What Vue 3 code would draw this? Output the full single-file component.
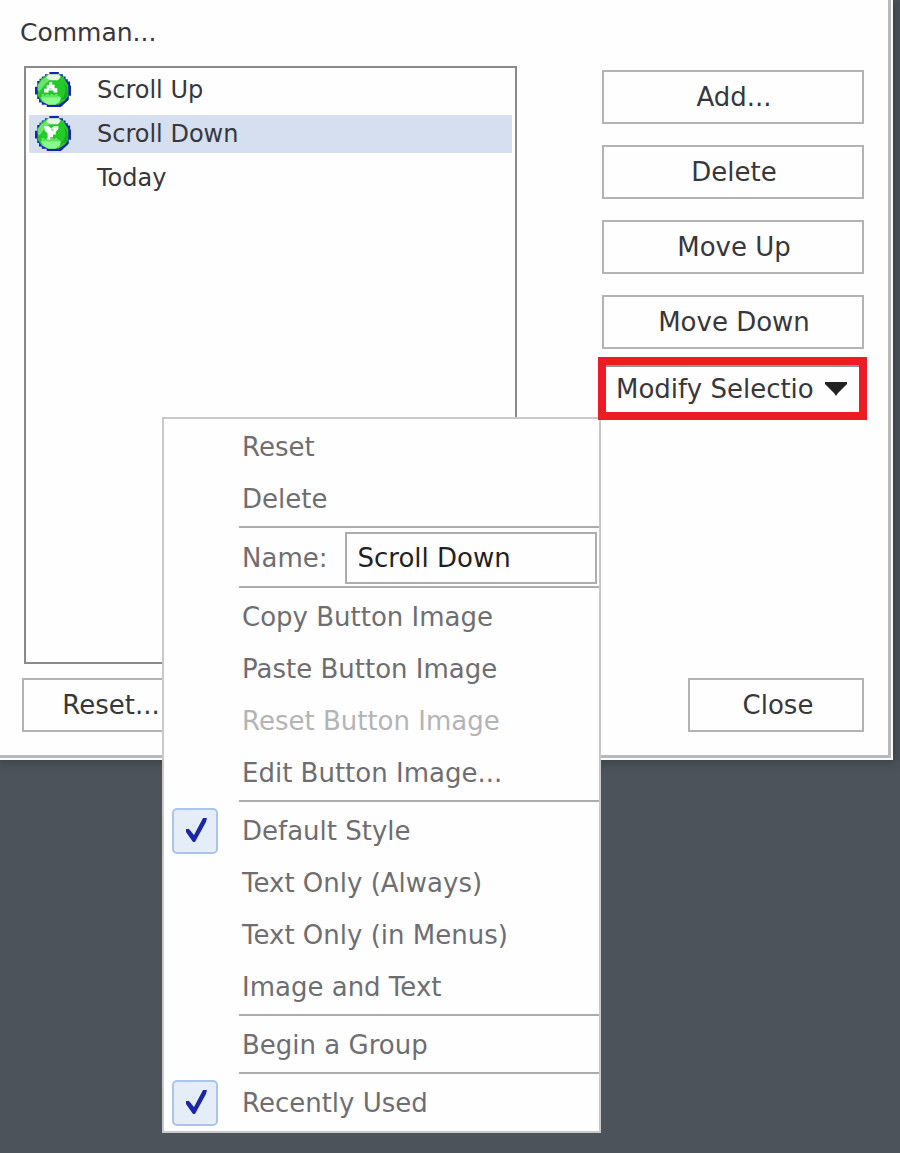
<script setup>
import { ref } from 'vue'

const commands = [
  { name: 'Scroll Up', icon: 'up' },
  { name: 'Scroll Down', icon: 'down' },
  { name: 'Today', icon: '' }
]
const selected = ref(1)
const name = ref('Scroll Down')
const style = ref('Default Style')
const styles = ['Default Style', 'Text Only (Always)', 'Text Only (in Menus)', 'Image and Text']
const beginGroup = ref(false)
const recentlyUsed = ref(true)
</script>

<template>
  <div class="page">
    <main class="dialog">
      <div class="columns">
        <section class="commands">
          <h1 id="commands-label" class="heading">Comman...</h1>
          <ul class="list" role="listbox" aria-labelledby="commands-label">
            <li
              v-for="(command, i) in commands"
              :key="command.name"
              class="item"
              :class="{ selected: i === selected }"
              role="option"
              :aria-selected="i === selected"
              @click="selected = i"
            >
              <span class="icon-slot">
                <svg v-if="command.icon" class="orb" viewBox="0 0 16 16" aria-hidden="true">
                  <path d="M6.400 0h4.200v1h1.800v1h1.200v1.200h1v1h1V6H16v4.500h-1v1.800l-3.500 3.300H5.200v-1H3v-1H1.800V12H1v-2H0V6.500h1V4h1V3h1V2h1.400V1h2z" fill="#1a23b0" />
                  <path d="M5.500 1h5l2.300 1.300L14.800 6v4.500l-1.600 2.300-2.700 1.700H6L3 13.200 1.200 10.500V5.800L2.800 3z" fill="#25c92a" />
                  <path d="M6 1h4.600l.8 1.200-1.200 1.500H6.400L4.800 2.500z" fill="#e6f5e6" />
                  <path d="M3 3.500L4.800 2.400 6.400 3.700 4.400 5.600 2 8.700 1.200 8V5.800z" fill="#6ae56c" />
                  <path d="M13 5l.6 3-.8 3-2 1.400 2.800-.6 1-2-.4-3z" fill="#17ac20" />
                  <path d="M2.600 11.200l2-.8h5l2 1-.8 2-1.800 1.100H6L3.600 13.200z" fill="#8cfa8c" />
                  <path d="M3 9.800h1v.8h1v-.8h1v.8h1v-.8h1v.8h1v-.8h1v.8h1v.7H3z" fill="#5fe463" />
                  <template v-if="command.icon === 'up'">
                    <path d="M6.300 4.500h1.400v1.200h1v1.500h1.200v1.900H8.200V8.200H6v.9H4V7.400h1.200V5.800h1.100z" fill="#fff" />
                    <path d="M6.200 7h1.200v1H6.200z" fill="#b8efb9" />
                  </template>
                  <template v-else>
                    <path d="M4 4.600h2.200l1 1 1.200-1h2v1.200L9.200 7v1.200H8v1.200H6.800v1H5.600V7.800L4.400 6.600z" fill="#fff" />
                    <path d="M7.200 5.600h1v1h-1z" fill="#8fe691" />
                  </template>
                </svg>
              </span>
              {{ command.name }}
            </li>
          </ul>
        </section>

        <div class="actions">
          <button type="button" class="btn">Add...</button>
          <button type="button" class="btn">Delete</button>
          <button type="button" class="btn">Move Up</button>
          <button type="button" class="btn">Move Down</button>
          <button type="button" class="modify" aria-haspopup="true" aria-expanded="true">
            <span>Modify Selectio</span>
            <svg class="arrow" viewBox="0 0 24 14" aria-hidden="true">
              <path d="M1 0h22v2L14 11l-2 3-2-3L1 2z" fill="#222" />
            </svg>
          </button>
        </div>
      </div>

      <footer class="footer">
        <button type="button" class="btn reset">Reset...</button>
        <button type="button" class="btn close">Close</button>
      </footer>
    </main>

    <div class="menu">
      <button type="button" class="row entry">Reset</button>
      <button type="button" class="row entry">Delete</button>
      <hr class="rule" />
      <div class="name-row">
        <label for="button-name">Name:</label>
        <input id="button-name" v-model="name" class="name-input" type="text" />
      </div>
      <hr class="rule" />
      <button type="button" class="row entry">Copy Button Image</button>
      <button type="button" class="row entry">Paste Button Image</button>
      <button type="button" class="row entry" disabled>Reset Button Image</button>
      <button type="button" class="row entry">Edit Button Image...</button>
      <hr class="rule" />
      <label v-for="s in styles" :key="s" class="row">
        <input v-model="style" class="tick" type="radio" name="style" :value="s" />
        {{ s }}
      </label>
      <hr class="rule" />
      <label class="row">
        <input v-model="beginGroup" class="tick" type="checkbox" />
        Begin a Group
      </label>
      <hr class="rule" />
      <label class="row">
        <input v-model="recentlyUsed" class="tick" type="checkbox" />
        Recently Used
      </label>
    </div>
  </div>
</template>

<style>
html {
  background: #4c535a;
}
</style>

<style scoped>
* {
  box-sizing: border-box;
}

/* The dialog and its open menu share one grid cell, so the menu adds to the page height. */
.page {
  display: grid;
  grid-template-columns: minmax(0, 1fr);
  align-items: start;
  min-height: 100vh;
  padding-bottom: 20px;
  overflow: hidden;
  color: #37373c;
  font: 26px/36px "DejaVu Sans", Verdana, sans-serif;
}

.dialog {
  grid-area: 1 / 1;
  margin-right: 9px;
  padding: 15px 24px 23px 22px;
  background: #fefefe;
  border: solid #b9b9b9;
  border-width: 0 3px 3px 0;
  outline: 2px solid #fafafa;
  box-shadow: 2px 2px 8px 3px #3c4448;
}

button,
input {
  margin: 0;
  color: inherit;
  font: inherit;
}

.columns {
  display: flex;
  gap: 85px;
  padding-left: 2px;
}

.commands {
  flex: 1;
  display: flex;
  flex-direction: column;
  gap: 15px;
  min-width: 0;
}

.heading {
  margin: 0 0 0 -4px;
  font-size: 25px;
  font-weight: 400;
  line-height: 36px;
}

.list {
  display: flex;
  flex-direction: column;
  gap: 6px;
  min-height: 598px;
  margin: 0;
  padding: 3px;
  border: 2px solid #8a8a8a;
  list-style: none;
  font-size: 24px;
}

.item {
  display: flex;
  align-items: center;
  height: 38px;
}

.item.selected {
  background: #d5dff0;
}

.icon-slot {
  display: flex;
  width: 68px;
  padding-left: 6px;
}

.orb {
  width: 36px;
  height: 36px;
}

.actions {
  display: flex;
  flex-direction: column;
  gap: 21px;
  width: 262px;
  padding-top: 55px;
}

.btn {
  height: 54px;
  padding: 0 0 0 2px;
  background: #fefefe;
  border: 2px solid #b3b3b3;
}

.modify {
  position: relative;
  z-index: 2;
  display: flex;
  align-items: center;
  justify-content: space-between;
  height: 63px;
  margin: -13px -3px 0 -4px;
  padding: 0 11px 0 10px;
  background: #fefefe;
  border: 8px solid #ed1c24;
  box-shadow: inset 0 2px 0 #929292;
  white-space: nowrap;
}

.arrow {
  flex: none;
  width: 24px;
  height: 14px;
}

.footer {
  display: flex;
  justify-content: space-between;
  margin-top: 14px;
}

.reset,
.close {
  width: 176px;
}

.close {
  padding-left: 4px;
}

.menu {
  grid-area: 1 / 1;
  justify-self: end;
  z-index: 1;
  width: 439px;
  margin: 417px 299px 0 0;
  padding: 2px 0;
  background: #fefefe;
  border: 2px solid #c9c9c9;
  color: #6e6e72;
}

.row {
  display: flex;
  align-items: center;
  gap: 24px;
  width: 100%;
  height: 52px;
  padding: 0 0 0 8px;
}

.entry {
  padding-left: 78px;
  background: none;
  border: 0;
  text-align: left;
}

.entry:disabled {
  color: #b4b4b6;
}

.rule {
  height: 2px;
  margin: 1px 0 3px 75px;
  background: #adadad;
  border: 0;
}

.name-row {
  display: flex;
  align-items: center;
  gap: 18px;
  height: 54px;
  padding: 0 2px 0 78px;
}

.name-input {
  flex: 1;
  min-width: 0;
  height: 52px;
  padding: 0 10px;
  background: #fefefe;
  border: 2px solid #adadad;
  border-radius: 0;
  color: #1f1f26;
}

.tick {
  flex: none;
  width: 46px;
  height: 46px;
  margin: 0;
  appearance: none;
  border: 2px solid transparent;
  border-radius: 5px;
}

.tick:checked {
  background: #e5edf8;
  border-color: #aac5e8;
}

.tick:checked::before {
  content: "";
  display: block;
  width: 42px;
  height: 42px;
  background: #1c26a8;
  clip-path: polygon(12px 19px, 15px 19px, 20px 25px, 29px 8px, 33px 8px, 32px 12px, 21px 32px, 19px 32px, 12px 22px);
}
</style>
